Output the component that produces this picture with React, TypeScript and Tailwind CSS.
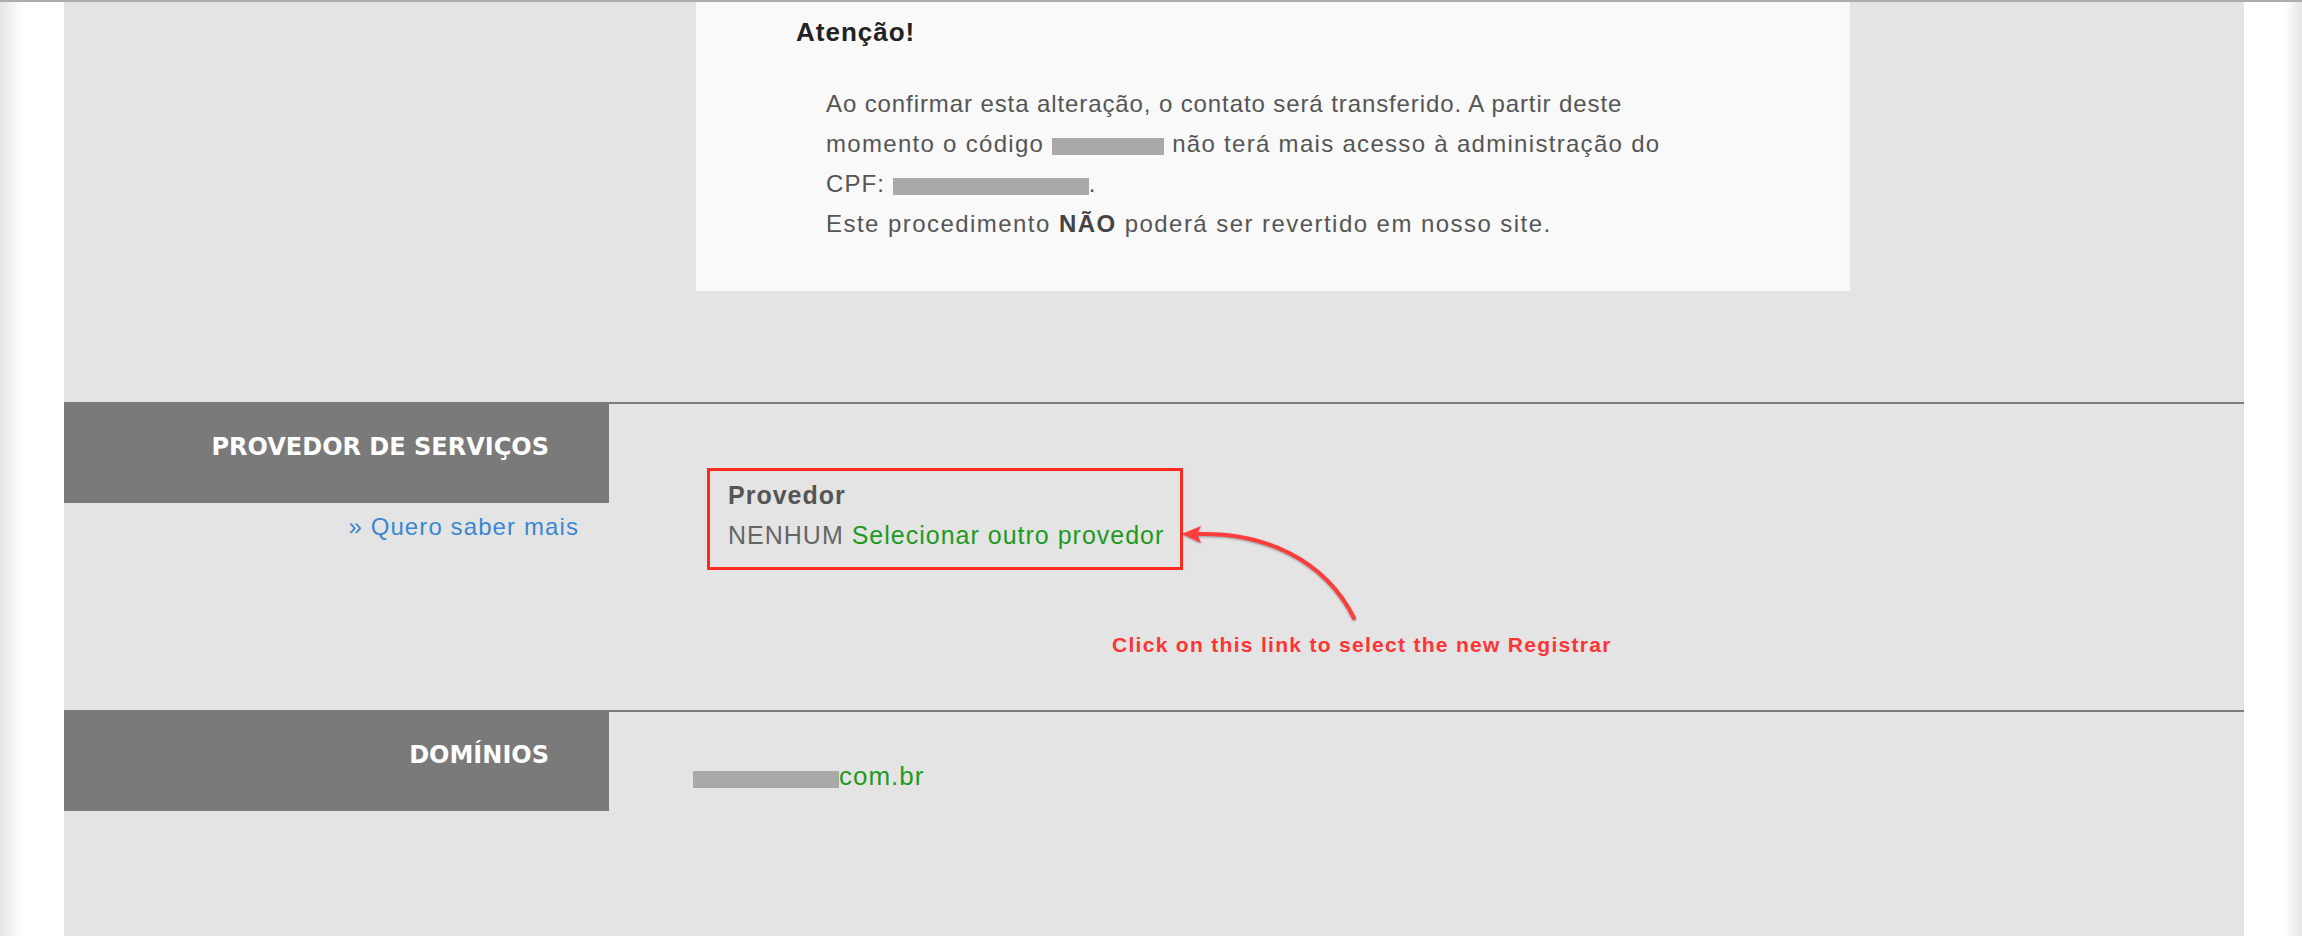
import { ReactNode } from 'react'

const sans = "font-['Liberation_Sans',Arial,sans-serif]"
const heading = "font-['DejaVu_Sans',sans-serif]"

function Blur({ w }: { w: number }) {
  return (
    <span
      className="inline-block h-[17px] bg-[#a9a9a9] align-[-3px] blur-[0.6px]"
      style={{ width: w }}
    />
  )
}

function SectionLabel({ children }: { children: ReactNode }) {
  return (
    <div
      className={`h-[99px] bg-[#7a7a7a] pr-[60px] pt-[31px] text-right text-[24px] leading-[24px] font-bold text-white ${heading}`}
    >
      {children}
    </div>
  )
}

function Arrow() {
  return (
    <svg
      width="190"
      height="110"
      viewBox="0 0 190 110"
      className="absolute left-[1111px] top-[116px] drop-shadow-[0_1px_1px_rgba(0,0,0,0.35)]"
    >
      <path
        d="M22 14 C90 12 150 40 179 98"
        fill="none"
        stroke="#ff3c3c"
        strokeWidth="4"
        strokeLinecap="round"
      />
      <path d="M7 14 L26 6 L22 14 L26 23 Z" fill="#ff3c3c" />
    </svg>
  )
}

export default function App() {
  return (
    <div className={`flex min-h-[936px] w-full border-t-2 border-[#acacac] bg-white ${sans}`}>
      <div className="w-[22px] shrink-0 bg-gradient-to-r from-[#e6e6e6] to-white" />
      <div className="w-[42px] shrink-0 bg-white" />

      <div className="flex flex-1 flex-col bg-[#e4e4e4]">
        {/* aviso */}
        <div className="ml-[632px] h-[289px] w-[1154px] bg-[#f9f9f9] pl-[100px] pt-[14px]">
          <div className="text-[26px] leading-[32px] font-bold tracking-[1px] text-[#222]">
            Atenção!
          </div>
          <p className="mt-[36px] pl-[30px] text-[24px] leading-[40px] text-[#555]">
            <span className="tracking-[0.9px]">
              Ao confirmar esta alteração, o contato será transferido. A partir deste
            </span>
            <br />
            <span className="tracking-[1.3px]">
              momento o código <Blur w={112} /> não terá mais acesso à administração do
            </span>
            <br />
            <span className="tracking-[1.1px]">
              CPF: <Blur w={196} />.
            </span>
            <br />
            <span className="tracking-[1.45px]">
              Este procedimento <b className="text-[#444]">NÃO</b> poderá ser revertido em nosso site.
            </span>
          </p>
        </div>

        {/* provedor */}
        <div className="relative mt-[111px] grid h-[308px] grid-cols-[545px_1fr] border-t-2 border-[#7a7a7a]">
          <div>
            <SectionLabel>PROVEDOR DE SERVIÇOS</SectionLabel>
            <div className="mt-[8px] pr-[30px] text-right text-[24px] leading-[32px] tracking-[1.1px] text-[#3a87d2]">
              » Quero saber mais
            </div>
          </div>
          <div className="pl-[98px] pt-[64px]">
            <div className="h-[102px] w-[476px] border-[3px] border-[#ff2a1f] pl-[18px] pt-[4px] text-[25px] leading-[40px] tracking-[1px]">
              <div className="font-bold text-[#555]">Provedor</div>
              <div>
                <span className="text-[#666]">NENHUM</span>{' '}
                <a className="text-[#1f9a1f]">Selecionar outro provedor</a>
              </div>
            </div>
          </div>
          <Arrow />
          <div className="absolute left-[1048px] top-[229px] text-[21px] leading-[24px] font-bold tracking-[1.3px] text-[#ff3434]">
            Click on this link to select the new Registrar
          </div>
        </div>

        {/* dominios */}
        <div className="grid flex-1 grid-cols-[545px_1fr] border-t-2 border-[#7a7a7a]">
          <div>
            <SectionLabel>DOMÍNIOS</SectionLabel>
          </div>
          <div className="pl-[84px] pt-[48px] text-[26px] leading-[32px] tracking-[1px] text-[#1f9a1f]">
            <Blur w={146} />
            com.br
          </div>
        </div>
      </div>

      <div className="w-[40px] shrink-0 bg-white" />
      <div className="w-[18px] shrink-0 bg-gradient-to-r from-white to-[#e6e6e6]" />
    </div>
  )
}
